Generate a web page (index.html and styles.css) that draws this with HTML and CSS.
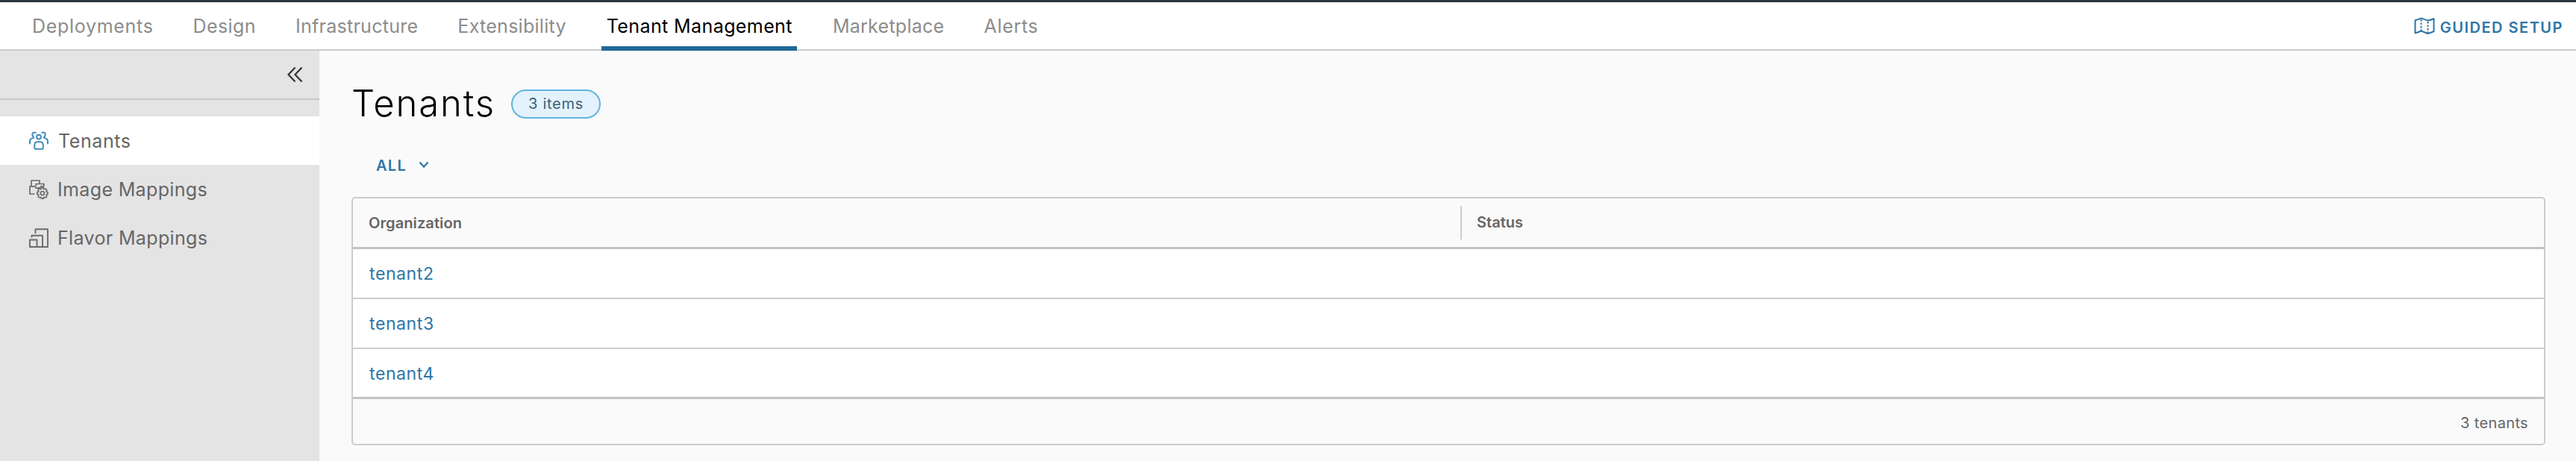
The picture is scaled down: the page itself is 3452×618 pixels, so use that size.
FILE: index.html
```html
<!DOCTYPE html>
<html lang="en">
<head>
<meta charset="utf-8">
<title>Tenants</title>
<link rel="stylesheet" href="styles.css">
</head>
<body>
<div class="app">
  <header class="header">
    <nav class="tabs">
      <a class="tab tab-wide">Deployments</a>
      <a class="tab">Design</a>
      <a class="tab tab-tight">Infrastructure</a>
      <a class="tab tab-tight">Extensibility</a>
      <a class="tab tab-active">Tenant Management</a>
      <a class="tab tab-tight">Marketplace</a>
      <a class="tab tab-wide">Alerts</a>
    </nav>
    <a class="guided">
      <svg class="guided-icon" viewBox="0 0 28 24" fill="none" stroke="currentColor" stroke-width="2" stroke-linejoin="round">
        <path d="M1.5 4.2Q6 2.8 9.5 1.4L18.5 4.600Q22.5 4 26.500 2V19Q22.500 21 18.500 22L9.500 18.500Q6 20 1.500 21.500Z"/>
        <path d="M9.500 3V18.500M18.500 6V22" stroke-dasharray="2.600 1.800"/>
      </svg>
      <span>GUIDED SETUP</span>
    </a>
  </header>
  <div class="body">
    <aside class="sidebar">
      <div class="collapse">
        <svg class="collapse-icon" viewBox="0 0 22 22" fill="none" stroke="currentColor" stroke-width="2.200">
          <path d="M11.500 1.500L2.500 11L11.500 20.500M20.500 1.500L11.500 11L20.500 20.500"/>
        </svg>
      </div>
      <a class="side-item side-active">
        <svg class="side-icon" viewBox="0 0 26 26" fill="none" stroke="currentColor" stroke-width="2" stroke-linecap="round" stroke-linejoin="round">
          <circle cx="13" cy="7.600" r="2.900"/>
          <path d="M7.300 22V19Q7.300 14 12 14H14Q18.800 14 18.800 19V22Q18.800 23.800 17 23.800H9Q7.300 23.800 7.300 22Z"/>
          <path d="M8.800 2C7 1 4.500 1.300 4.300 3.800Q4.200 6.500 6.300 8.500C2.500 9.500 1 11 1 13.500V16.500M17.200 2C19 1 21.500 1.300 21.700 3.800Q21.800 6.500 19.700 8.500C23.500 9.500 25 11 25 13.500V16.500"/>
        </svg>
        <span class="label-tenants">Tenants</span>
      </a>
      <a class="side-item">
        <svg class="side-icon" viewBox="0 0 26 26" fill="none" stroke="currentColor" stroke-width="1.700" stroke-linejoin="round">
          <path d="M3 8.500V1H14V5M7.500 19H1V8.800H7.500L9.500 11.200H14M9.300 8.500V5.500H19.800V8.800H16L14 11.200"/>
          <path d="M16.600 10.800H19.200L19.800 12.700L22 12L23.700 13.700L23 15.900L25 16.700V19.300L23 20.100L23.700 22.300L22 24L19.800 23.300L19.200 25.200H16.600L15.900 23.300L13.800 24L12 22.300L12.800 20.100L10.800 19.300V16.700L12.800 15.900L12 13.700L13.800 12L15.900 12.700Z"/>
          <circle cx="17.900" cy="18" r="2.500"/>
        </svg>
        <span>Image Mappings</span>
      </a>
      <a class="side-item">
        <svg class="side-icon" viewBox="0 0 26 26" fill="none" stroke="currentColor" stroke-width="1.900" stroke-linejoin="round">
          <path d="M8.500 7V1.200H25V25H1V15.500H10.500V25M3.500 12.500V9.800H18V25"/>
        </svg>
        <span>Flavor Mappings</span>
      </a>
    </aside>
    <main class="main">
      <div class="title-row">
        <h1 class="title">Tenants</h1>
        <span class="badge">3 items</span>
      </div>
      <div class="filter">
        <span>ALL</span>
        <svg class="caret" viewBox="0 0 14 10" fill="none" stroke="currentColor" stroke-width="2.200"><path d="M1.500 1.500L7 7.500L12.500 1.500"/></svg>
      </div>
      <section class="grid">
        <div class="grid-head">
          <div class="col-org">Organization</div>
          <div class="col-status">Status</div>
        </div>
        <div class="row">tenant2</div>
        <div class="row">tenant3</div>
        <div class="row row-last">tenant4</div>
        <div class="grid-foot">3 tenants</div>
      </section>
    </main>
  </div>
</div>
</body>
</html>
```
FILE: styles.css
```css
* {
  box-sizing: border-box;
}

body {
  margin: 0;
  font-family: Inter, "Open Sans", sans-serif;
  color: #565656;
  background: #fafafa;
}

.app {
  display: flex;
  flex-direction: column;
  height: 618px;
  overflow: hidden;
}

.header {
  display: flex;
  justify-content: space-between;
  height: 68px;
  padding: 0 17px 0 36.5px;
  background: #fff;
  border-top: 3px solid #2b3640;
  border-bottom: 2px solid #ccc;
}

.tabs {
  display: flex;
  gap: 40px;
}

.tab {
  height: 65px;
  padding: 0 6.5px;
  font-size: 25px;
  line-height: 64px;
  letter-spacing: 0.4px;
  color: #8c8c8c;
  white-space: nowrap;
}

.tab-wide {
  letter-spacing: 0.7px;
}

.tab-tight {
  letter-spacing: 0.27px;
}

.tab-active {
  margin-left: 1px;
  margin-right: 1px;
  color: #000;
  border-bottom: 6px solid #21679a;
}

.guided {
  display: flex;
  align-items: center;
  gap: 7px;
  height: 67px;
  font-size: 20px;
  font-weight: 600;
  letter-spacing: 1.5px;
  color: #2d76a6;
}

.guided-icon {
  width: 28px;
  height: 24px;
  margin-top: -3px;
}

.body {
  display: flex;
  flex: 1;
}

.sidebar {
  width: 428px;
  background: #e4e4e4;
}

.collapse {
  display: flex;
  justify-content: flex-end;
  height: 66px;
  margin-bottom: 22px;
  padding: 21px 22px 0 0;
  border-bottom: 2px solid #c8c8c8;
  color: #333;
}

.collapse-icon {
  width: 22px;
  height: 22px;
}

.side-item {
  display: flex;
  align-items: center;
  gap: 12px;
  height: 65px;
  padding-left: 39px;
  font-size: 25px;
  letter-spacing: 0.35px;
  color: #666;
}

.side-active {
  background: #fff;
}

.side-icon {
  width: 26px;
  height: 26px;
  color: #6b6b6b;
}

.side-active .side-icon {
  color: #3f8bb8;
}

.label-tenants {
  margin-left: 1px;
  letter-spacing: 0.6px;
}

.main {
  flex: 1;
  padding: 46px 41px 0 43px;
}

.title-row {
  display: flex;
  align-items: center;
  height: 50px;
}

.title {
  width: 214px;
  margin: 0;
  font-size: 49px;
  font-weight: 300;
  line-height: 50px;
  letter-spacing: 1.9px;
  color: #000;
}

.badge {
  width: 120px;
  height: 39px;
  border: 2px solid #63b3de;
  border-radius: 20px;
  background: #e3f2fc;
  font-size: 20px;
  line-height: 34px;
  letter-spacing: 0.7px;
  text-align: center;
  color: #3b617c;
}

.filter {
  display: flex;
  align-items: center;
  gap: 16px;
  height: 36px;
  margin: 40px 0 0 33px;
  font-size: 20px;
  font-weight: 600;
  letter-spacing: 1.3px;
  line-height: 36px;
  color: #2d76a6;
}

.caret {
  width: 14px;
  height: 10px;
  margin-top: -2px;
}

.grid {
  margin-top: 24px;
  border: 2px solid #ccc;
  border-radius: 5px;
  overflow: hidden;
}

.grid-head {
  display: flex;
  align-items: center;
  height: 68px;
  padding-left: 21px;
  border-bottom: 3px solid #c3c3c3;
  font-size: 20px;
  font-weight: 600;
  letter-spacing: 0.1px;
  color: #666;
}

.col-org {
  width: 1463px;
}

.col-status {
  height: 45px;
  padding-left: 20px;
  border-left: 2px solid #ccc;
  line-height: 45px;
  letter-spacing: 0;
}

.row {
  height: 67px;
  padding-left: 22px;
  border-bottom: 2px solid #ccc;
  background: #fff;
  font-size: 23px;
  line-height: 67px;
  letter-spacing: 0.6px;
  color: #2d76a6;
}

.row-last {
  border-bottom: 3px solid #c3c3c3;
}

.grid-foot {
  height: 60px;
  padding-right: 21px;
  font-size: 20px;
  line-height: 64px;
  letter-spacing: 0.35px;
  text-align: right;
  color: #666;
}
```
